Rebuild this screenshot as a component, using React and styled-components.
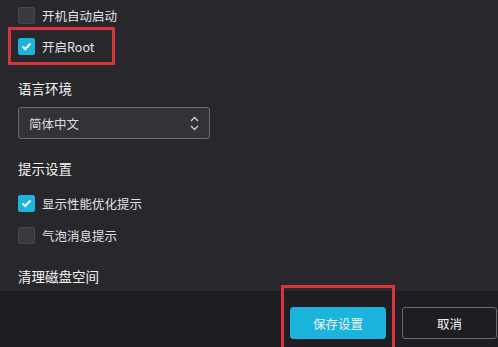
import React from 'react'
import styled, { createGlobalStyle } from 'styled-components'

const GlobalStyle = createGlobalStyle`
  html, body {
    margin: 0;
    padding: 0;
    background: #28272c;
  }
  * { box-sizing: border-box; }
`

const Page = styled.div`
  display: flex;
  flex-direction: column;
  width: 498px;
  height: 347px;
  overflow: hidden;
  font-family: "Noto Sans CJK SC", "Noto Sans", sans-serif;
  color: #e2e2e4;
  background: #28272c;
`

const Content = styled.div`
  flex: 1;
  overflow: hidden;
  padding-left: 18px;
  display: flex;
  flex-direction: column;
`

const Row = styled.label`
  position: relative;
  display: flex;
  align-items: center;
  gap: 7px;
  height: ${p => p.h || 32}px;
  margin-top: ${p => p.mt || 0}px;
  font-size: 12.5px;
  width: max-content;
`

const Box = styled.span`
  width: 17px;
  height: 17px;
  border-radius: 2px;
  display: flex;
  align-items: center;
  justify-content: center;
  background: ${p => (p.checked ? '#1cb4dc' : '#3a393e')};
  border: 1px solid ${p => (p.checked ? '#1cb4dc' : '#48474d')};
`

const Highlight = styled.span`
  position: absolute;
  left: -10px;
  width: 107px;
  top: -3px;
  bottom: -3px;
  border: 3px solid #d8343c;
  pointer-events: none;
`

const SectionTitle = styled.div`
  font-size: 13.5px;
  line-height: 20px;
  color: #f2f2f2;
  margin-top: ${p => p.mt}px;
`

const Select = styled.div`
  margin-top: 9px;
  width: 192px;
  height: 32px;
  border: 1px solid #6c6b71;
  border-radius: 3px;
  background: #333237;
  display: flex;
  align-items: center;
  justify-content: space-between;
  padding: 0 10px 0 10px;
  font-size: 12.5px;
  color: #dcdcde;
`

const Footer = styled.div`
  height: 56px;
  flex-shrink: 0;
  background: #1e1d22;
  display: flex;
  justify-content: flex-end;
  align-items: flex-start;
  gap: 16px;
  padding: 16px 1px 0 0;
`

const Button = styled.button`
  position: relative;
  width: ${p => p.w}px;
  height: 32px;
  border-radius: 3px;
  font-family: inherit;
  font-size: 12.5px;
  color: #f4f4f4;
  background: ${p => (p.primary ? '#1cb4dc' : 'transparent')};
  border: 1px solid ${p => (p.primary ? '#1cb4dc' : '#6c6b71')};
`

const ButtonHighlight = styled.span`
  position: absolute;
  left: -10px;
  right: -10px;
  top: -23px;
  bottom: -20px;
  border: 3px solid #d8343c;
`

const Check = () => (
  <svg width="11" height="9" viewBox="0 0 11 9">
    <path d="M1.5 4.5 L4.2 7 L9.5 1.5" fill="none" stroke="#fff" strokeWidth="2" />
  </svg>
)

const UpDown = () => (
  <svg width="9" height="15" viewBox="0 0 9 15">
    <path d="M1 5 L4.5 1.5 L8 5 M1 10 L4.5 13.5 L8 10" fill="none" stroke="#d0d0d2" strokeWidth="1.3" />
  </svg>
)

function CheckRow({ checked, label, h, mt, highlight }) {
  return (
    <Row h={h} mt={mt}>
      <Box checked={checked}>{checked && <Check />}</Box>
      {label}
      {highlight && <Highlight />}
    </Row>
  )
}

export default function App() {
  return (
    <>
      <GlobalStyle />
      <Page>
        <Content>
          <CheckRow label="开机自动启动" h={30} />
          <CheckRow checked label="开启Root" h={32} highlight />
          <SectionTitle mt={16}>语言环境</SectionTitle>
          <Select>
            简体中文
            <UpDown />
          </Select>
          <SectionTitle mt={19}>提示设置</SectionTitle>
          <CheckRow checked label="显示性能优化提示" mt={9} />
          <CheckRow label="气泡消息提示" />
          <SectionTitle mt={15}>清理磁盘空间</SectionTitle>
        </Content>
        <Footer>
          <Button primary w={96}>
            保存设置
            <ButtonHighlight />
          </Button>
          <Button w={95}>取消</Button>
        </Footer>
      </Page>
    </>
  )
}
